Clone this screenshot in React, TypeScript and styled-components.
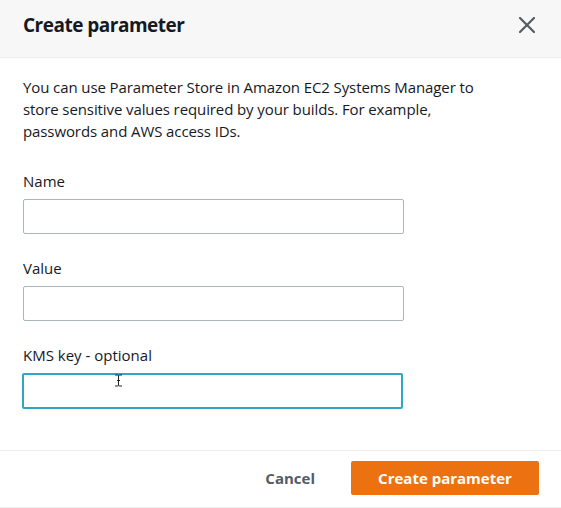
import React from 'react'
import styled, { createGlobalStyle } from 'styled-components'

const GlobalStyle = createGlobalStyle`
  html, body {
    margin: 0;
    padding: 0;
    background: #ffffff;
  }
  body {
    font-family: 'Open Sans', 'Liberation Sans', sans-serif;
    color: #16191f;
  }
`

const Modal = styled.div`
  position: relative;
  width: 561px;
  height: 508px;
  display: flex;
  flex-direction: column;
  background: #ffffff;
  border-bottom: 1px solid #eaeded;
  box-sizing: border-box;
`

const Header = styled.div`
  height: 58px;
  box-sizing: border-box;
  display: flex;
  align-items: center;
  justify-content: space-between;
  padding: 0 25px 7px 23px;
  background: #f7f7f7;
  border-bottom: 1px solid #eaeded;
`

const Title = styled.h2`
  margin: 0;
  font-size: 19px;
  font-weight: 700;
  letter-spacing: -0.5px;
  line-height: 26px;
  color: #16191f;
`

const CloseButton = styled.button`
  width: 18px;
  height: 18px;
  padding: 0;
  border: none;
  background: none;
  display: flex;
  align-items: center;
  justify-content: center;
  cursor: pointer;
`

const Body = styled.div`
  flex: 1;
  padding: 18px 23px 0 23px;
`

const Intro = styled.p`
  margin: 0 0 28px 0;
  font-size: 15px;
  letter-spacing: -0.1px;
  line-height: 22px;
  max-width: 480px;
`

const Field = styled.div`
  display: flex;
  flex-direction: column;
  margin-bottom: 23px;
`

const Label = styled.label`
  font-size: 15px;
  line-height: 22px;
  margin-bottom: 7px;
`

const Input = styled.input<{ $focused?: boolean }>`
  box-sizing: border-box;
  width: 381px;
  height: ${({ $focused }) => ($focused ? '36px' : '35px')};
  margin: ${({ $focused }) => ($focused ? '0 0 0 -1px' : '0')};
  border: ${({ $focused }) => ($focused ? '2px solid #2fa6c2' : '1px solid #aab7b8')};
  border-radius: 2px;
  outline: none;
  background: #ffffff;
  font-family: inherit;
  font-size: 14px;
`

const Footer = styled.div`
  height: 57px;
  box-sizing: border-box;
  display: flex;
  align-items: center;
  justify-content: flex-end;
  gap: 36px;
  padding: 0 22px 2px 0;
  border-top: 1px solid #eaeded;
`

const LinkButton = styled.button`
  border: none;
  background: none;
  padding: 0;
  font-family: inherit;
  font-size: 15px;
  font-weight: 700;
  color: #545b64;
  cursor: pointer;
`

const PrimaryButton = styled.button`
  width: 188px;
  height: 34px;
  border: none;
  border-radius: 2px;
  background: #ec7211;
  color: #ffffff;
  font-family: inherit;
  font-size: 15px;
  font-weight: 700;
  cursor: pointer;
`

const Cursor = styled.div`
  position: absolute;
  left: 114px;
  top: 370px;
  width: 9px;
  height: 13px;
  pointer-events: none;
`

const App: React.FC = () => {
  return (
    <>
      <GlobalStyle />
      <Modal>
        <Header>
          <Title>Create parameter</Title>
          <CloseButton aria-label="Close">
            <svg width="16" height="16" viewBox="0 0 16 16">
              <path d="M1 1 L15 15 M15 1 L1 15" stroke="#545b64" strokeWidth="2.2" strokeLinecap="round" />
            </svg>
          </CloseButton>
        </Header>
        <Body>
          <Intro>
            You can use Parameter Store in Amazon EC2 Systems Manager to store sensitive values required by your
            builds. For example, passwords and AWS access IDs.
          </Intro>
          <Field>
            <Label>Name</Label>
            <Input />
          </Field>
          <Field>
            <Label>Value</Label>
            <Input />
          </Field>
          <Field>
            <Label>KMS key - optional</Label>
            <Input $focused />
          </Field>
        </Body>
        <Footer>
          <LinkButton>Cancel</LinkButton>
          <PrimaryButton>Create parameter</PrimaryButton>
        </Footer>
        <Cursor>
          <svg width="9" height="13" viewBox="0 0 9 13">
            <path d="M1 1 H3.5 Q4.5 1 4.5 2 V11 Q4.5 12 3.5 12 H1 M8 1 H5.5 Q4.5 1 4.5 2 M4.5 11 Q4.5 12 5.5 12 H8 M3 6.5 H6" stroke="#222" strokeWidth="1" fill="none" />
          </svg>
        </Cursor>
      </Modal>
    </>
  )
}

export default App
